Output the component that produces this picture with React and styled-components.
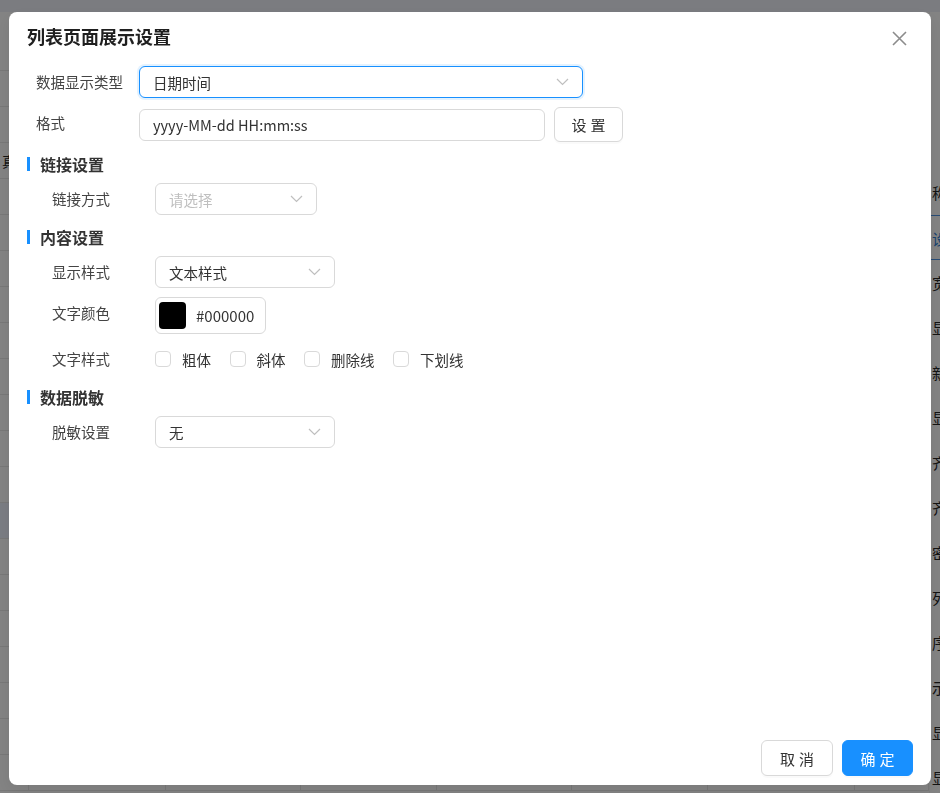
import React from 'react'
import styled, { createGlobalStyle } from 'styled-components'

const GlobalStyle = createGlobalStyle`
  * { box-sizing: border-box; }
  html, body { margin: 0; padding: 0; }
  body {
    font-family: "Noto Sans CJK SC", "Noto Sans", "Liberation Sans", sans-serif;
    font-size: 14.5px;
    color: #333;
    background: #efefef;
    overflow: hidden;
  }
`

/* ---------- page behind the mask ---------- */

const Page = styled.div`
  width: 940px;
  height: 793px;
  display: grid;
  grid-template-rows: 12px 1fr;
  background: #efefef;
`

const TopBar = styled.div`
  background: #e0e2ea;
`

const PageMain = styled.div`
  display: grid;
  grid-template-columns: 929px 1fr;
  overflow: hidden;
`

const Table = styled.div`
  display: flex;
  flex-direction: column;
  padding-top: 23px;
`

const TableRow = styled.div`
  height: 36px;
  flex-shrink: 0;
  border-bottom: 1px solid #dadada;
  background: ${p => (p.selected ? '#dfe3ee' : 'transparent')};
  display: grid;
  grid-template-columns: 29px 137px 135px 136px 135px 136px 147px 1fr;
  font-size: 14px;
  line-height: 36px;
  color: #222;
  white-space: nowrap;
  overflow: hidden;
`

const Cell = styled.div`
  border-right: 1px solid #dadada;
  padding-left: 2px;
`

const SidePanel = styled.div`
  display: flex;
  flex-direction: column;
  padding-top: 158px;
  border-left: 1px solid #e6e6e6;
`

const SideItem = styled.div`
  height: 45px;
  line-height: 45px;
  padding-left: 2px;
  font-size: 15px;
  white-space: nowrap;
  color: ${p => (p.active ? '#2f78c7' : '#222')};
  border-top: ${p => (p.active ? '1px solid #4a8bd6' : 'none')};
  border-bottom: ${p => (p.active ? '1px solid #4a8bd6' : 'none')};
`

/* ---------- modal ---------- */

const Mask = styled.div`
  position: fixed;
  inset: 0;
  background: rgba(0, 0, 0, 0.45);
  display: flex;
  padding: 12px 9px 8px 9px;
`

const Dialog = styled.div`
  flex: 1;
  background: #fff;
  border-radius: 8px;
  display: flex;
  flex-direction: column;
  box-shadow: 0 6px 16px rgba(0, 0, 0, 0.08);
`

const Header = styled.div`
  height: 54px;
  padding: 12px 24px 0 18px;
  display: flex;
  align-items: flex-start;
  justify-content: space-between;
`

const Title = styled.div`
  font-size: 18px;
  font-weight: 700;
  line-height: 24px;
  color: #1f1f1f;
`

const CloseButton = styled.button`
  border: none;
  background: none;
  padding: 0;
  margin-top: 6px;
  width: 16px;
  height: 16px;
  display: flex;
  align-items: center;
  justify-content: center;
  cursor: pointer;
`

const Body = styled.div`
  flex: 1;
  padding: 0 18px;
  display: flex;
  flex-direction: column;
  align-items: flex-start;
`

const FormItem = styled.div`
  display: flex;
  align-items: flex-start;
  margin-bottom: 9px;
  padding-left: ${p => (p.indent ? '25px' : '9px')};
`

const Label = styled.div`
  width: 103px;
  flex-shrink: 0;
  line-height: 32px;
  font-size: 14.5px;
  color: #444;
  white-space: nowrap;
`

const Control = styled.div`
  display: flex;
  align-items: center;
  gap: 9px;
  min-height: ${p => p.h || 32}px;
`

const SelectBox = styled.div`
  width: ${p => p.w}px;
  height: 32px;
  border: 1px solid ${p => (p.focused ? '#1890ff' : '#d9d9d9')};
  box-shadow: ${p => (p.focused ? '0 0 0 2px rgba(24, 144, 255, 0.12)' : 'none')};
  border-radius: 6px;
  padding: 0 13px;
  display: flex;
  align-items: center;
  justify-content: space-between;
  background: #fff;
`

const SelectValue = styled.span`
  font-size: 14.5px;
  color: ${p => (p.placeholder ? '#bfbfbf' : '#333')};
`

const TextInput = styled.div`
  width: ${p => p.w}px;
  height: 32px;
  border: 1px solid #d9d9d9;
  border-radius: 6px;
  padding: 0 13px;
  display: flex;
  align-items: center;
  font-size: 14.5px;
  color: #333;
`

const Button = styled.button`
  height: ${p => p.h || 36}px;
  width: ${p => p.w}px;
  border-radius: 6px;
  font-family: inherit;
  font-size: 15px;
  letter-spacing: 4px;
  text-indent: 4px;
  cursor: pointer;
  border: 1px solid ${p => (p.primary ? '#1890ff' : '#d9d9d9')};
  background: ${p => (p.primary ? '#1890ff' : '#fff')};
  color: ${p => (p.primary ? '#fff' : '#333')};
  box-shadow: 0 2px 0 rgba(0, 0, 0, 0.02);
`

const SectionTitle = styled.div`
  display: flex;
  align-items: center;
  gap: 10px;
  height: 20px;
  margin: 3px 0 9px;
  font-size: 16px;
  font-weight: 700;
  color: #333;

  &::before {
    content: '';
    width: 3px;
    height: 14px;
    background: #1890ff;
  }
`

const ColorPicker = styled.div`
  width: 111px;
  height: 37px;
  border: 1px solid #d9d9d9;
  border-radius: 6px;
  padding: 0 3px;
  display: flex;
  align-items: center;
  gap: 10px;
  font-size: 15px;
  color: #333;
`

const Swatch = styled.div`
  width: 27px;
  height: 27px;
  border-radius: 4px;
  background: ${p => p.color};
`

const CheckGroup = styled.div`
  display: flex;
  align-items: center;
  height: 32px;
`

const CheckItem = styled.label`
  display: flex;
  align-items: center;
  gap: 11px;
  margin-right: 18.5px;
  font-size: 14.5px;
  color: #333;
`

const CheckBox = styled.span`
  width: 16px;
  height: 16px;
  border: 1px solid #d9d9d9;
  border-radius: 4px;
  background: #fff;
`

const Footer = styled.div`
  display: flex;
  justify-content: flex-end;
  gap: 9px;
  padding: 0 18px 9px;
`

const Chevron = () => (
  <svg width="13" height="8" viewBox="0 0 13 8" fill="none">
    <path d="M1 1l5.5 5.5L12 1" stroke="#bfbfbf" strokeWidth="1.2" />
  </svg>
)

const CloseIcon = () => (
  <svg width="15" height="15" viewBox="0 0 15 15" fill="none">
    <path d="M1 1l13 13M14 1L1 14" stroke="#8c8c8c" strokeWidth="1.6" />
  </svg>
)

const Select = ({ w, value, placeholder, focused }) => (
  <SelectBox w={w} focused={focused}>
    <SelectValue placeholder={placeholder ? 1 : 0}>{value || placeholder}</SelectValue>
    <Chevron />
  </SelectBox>
)

const columns = ['', '', '', '', '', '', '', '']
const sideItems = ['称', '设置', '宽度', '显示', '新增', '显示', '齐', '齐', '密码', '列宽', '序号', '示例', '显示', '显示']

const App = () => (
  <>
    <GlobalStyle />
    <Page>
      <TopBar />
      <PageMain>
        <Table>
          {Array.from({ length: 21 }).map((_, i) => (
            <TableRow key={i} selected={i === 13}>
              {columns.map((c, j) => (
                <Cell key={j}>{i === 3 && j === 0 ? '真' : c}</Cell>
              ))}
            </TableRow>
          ))}
        </Table>
        <SidePanel>
          {sideItems.map((t, i) => (
            <SideItem key={i} active={i === 1}>{t}</SideItem>
          ))}
        </SidePanel>
      </PageMain>
    </Page>

    <Mask>
      <Dialog>
        <Header>
          <Title>列表页面展示设置</Title>
          <CloseButton aria-label="close">
            <CloseIcon />
          </CloseButton>
        </Header>

        <Body>
          <FormItem>
            <Label>数据显示类型</Label>
            <Control>
              <Select w={444} value="日期时间" focused />
            </Control>
          </FormItem>

          <FormItem>
            <Label>格式</Label>
            <Control h={35}>
              <TextInput w={406}>yyyy-MM-dd HH:mm:ss</TextInput>
              <Button w={69} h={35}>设置</Button>
            </Control>
          </FormItem>

          <SectionTitle>链接设置</SectionTitle>
          <FormItem indent>
            <Label>链接方式</Label>
            <Control>
              <Select w={162} placeholder="请选择" />
            </Control>
          </FormItem>

          <SectionTitle>内容设置</SectionTitle>
          <FormItem indent>
            <Label>显示样式</Label>
            <Control>
              <Select w={180} value="文本样式" />
            </Control>
          </FormItem>

          <FormItem indent>
            <Label>文字颜色</Label>
            <Control h={37}>
              <ColorPicker>
                <Swatch color="#000" />
                #000000
              </ColorPicker>
            </Control>
          </FormItem>

          <FormItem indent>
            <Label>文字样式</Label>
            <CheckGroup>
              {['粗体', '斜体', '删除线', '下划线'].map(t => (
                <CheckItem key={t}>
                  <CheckBox />
                  {t}
                </CheckItem>
              ))}
            </CheckGroup>
          </FormItem>

          <SectionTitle>数据脱敏</SectionTitle>
          <FormItem indent>
            <Label>脱敏设置</Label>
            <Control>
              <Select w={180} value="无" />
            </Control>
          </FormItem>
        </Body>

        <Footer>
          <Button w={72}>取消</Button>
          <Button w={71} primary>确定</Button>
        </Footer>
      </Dialog>
    </Mask>
  </>
)

export default App
